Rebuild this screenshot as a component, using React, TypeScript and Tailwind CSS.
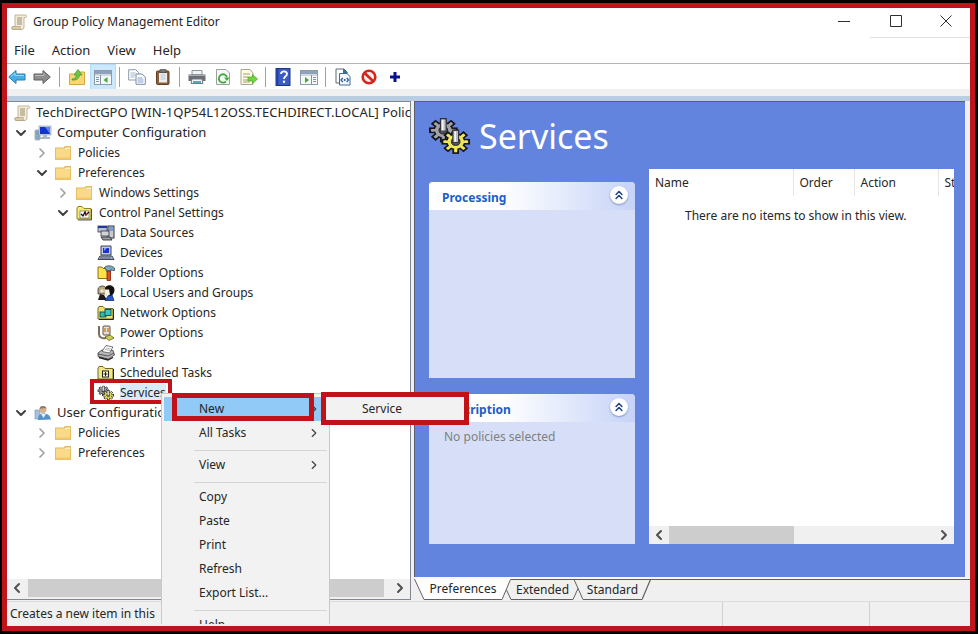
import React from 'react';
import { ChevronDown, ChevronLeft, ChevronRight, ChevronsUp } from 'lucide-react';

interface IconProps {
  className?: string;
}

const ScrollIcon: React.FC<IconProps> = ({ className = 'size-4' }) => (
  <svg viewBox="0 0 16 16" className={className} aria-hidden="true">
    <path d="M4 1h10.500c1.500 0 1.500 2.500 0 2.500H13V13c0 1.500-1 2.500-2.500 2.500H2C.5 15.500.5 12.500 2 12.500h2z" fill="#f4ecd6" stroke="#b5a587" strokeWidth="0.8" />
    <path d="M2 12.500h7.500c-.8 1.200 0 3 1 3H2c-1.500 0-1.500-3 0-3z" fill="#d9cba9" stroke="#a8987a" strokeWidth="0.6" />
    <path d="M6 4h5M6 6h5M6 8h5M6 10h5" stroke="#8d8472" strokeWidth="0.9" />
  </svg>
);

const FolderIcon: React.FC<IconProps> = ({ className = 'size-4' }) => (
  <svg viewBox="0 0 16 16" className={className} aria-hidden="true">
    <path d="M0 2.500h8.500L10 1h6v14H0z" fill="#e3b95c" />
    <path d="M.8 3.500H9.500L11 2h4.200v12.200H.8z" fill="#fbd98a" />
    <path d="M10 3.500h5.200" stroke="#fdf1cf" />
    <path d="M.8 12.500h14.400v1.700H.8z" fill="#f2c766" />
  </svg>
);

const ComputerIcon: React.FC = () => (
  <svg viewBox="0 0 18 16" className="h-4 w-[18px]" aria-hidden="true">
    <rect x="1" y="5" width="5" height="10" rx="1" fill="#a9b7c6" stroke="#7c8b9c" strokeWidth="0.6" />
    <path d="M2 7h3M2 9h3" stroke="#5f86b5" />
    <rect x="5" y="1" width="12" height="9" fill="#c8d4e4" stroke="#8896ad" strokeWidth="0.6" />
    <rect x="6" y="2" width="10" height="7" fill="#1236c4" />
    <path d="M11 2h5v7z" fill="#5b84ee" />
    <path d="M9 10h4v2h3v2H6v-2h3z" fill="#aab6c6" />
    <circle cx="4" cy="12" r="2" fill="#7ca9c9" />
  </svg>
);

const UserIcon: React.FC = () => (
  <svg viewBox="0 0 18 16" className="h-4 w-[18px]" aria-hidden="true">
    <rect x="1" y="5" width="5" height="9" fill="#a9c1dc" stroke="#7590b2" strokeWidth="0.6" />
    <path d="M4 15c0-5 2-6.500 5.500-6.500S16 10 17 14.500z" fill="#5590cc" />
    <path d="M7 9l2.500 4L12 9z" fill="#e8eef5" />
    <circle cx="9" cy="4.500" r="3.500" fill="#d9b088" />
    <path d="M5.500 4C5.500 0 12 0 12.500 3.500L10 3z" fill="#8c7b6c" />
  </svg>
);

const ControlPanelIcon: React.FC = () => (
  <svg viewBox="0 0 16 16" className="size-4" aria-hidden="true">
    <path d="M1 14V3l1-1.500h4l2 2h7V14z" fill="#f7ea74" stroke="#8f8426" />
    <rect x="4" y="6" width="9" height="7" fill="#fff" stroke="#555" strokeWidth="0.6" />
    <path d="M5 9l2 2 2-4 1 3 3-3" stroke="#111" strokeWidth="1.300" fill="none" />
    <path d="M9 11l2-3" stroke="#d33" strokeWidth="1.200" />
    <path d="M15.500 4v11H2" stroke="#333" fill="none" strokeWidth="0.8" />
  </svg>
);

const DataSourcesIcon: React.FC = () => (
  <svg viewBox="0 0 18 16" className="h-4 w-[18px]" aria-hidden="true">
    <rect x="1" y="1" width="9" height="6" fill="#b9c2d2" stroke="#3c4660" strokeWidth="0.8" />
    <path d="M1 2h9" stroke="#23349b" strokeWidth="2" />
    <rect x="11" y="1" width="6" height="12" fill="#c8cbd0" stroke="#222" strokeWidth="0.9" />
    <path d="M12 3h4M12 5h4" stroke="#2f6fd0" />
    <rect x="4" y="6" width="8" height="5" fill="#cfd4da" stroke="#333" strokeWidth="0.8" />
    <path d="M4 12h9l2 3H6z" fill="#9aa0aa" stroke="#222" strokeWidth="0.8" />
  </svg>
);

const DevicesIcon: React.FC = () => (
  <svg viewBox="0 0 18 16" className="h-4 w-[18px]" aria-hidden="true">
    <path d="M4 1h10v9H4z" fill="#c3cadb" stroke="#39415c" />
    <path d="M6 3h6v5H6z" fill="#1733d6" />
    <path d="M7 3h3L7 6z" fill="#7f9cf5" />
    <path d="M3 11h12l2 3.500H1z" fill="#aab3c6" stroke="#2c334a" strokeWidth="0.9" />
    <path d="M3 13h11" stroke="#555f7a" />
  </svg>
);

const FolderOptionsIcon: React.FC = () => (
  <svg viewBox="0 0 18 16" className="h-4 w-[18px]" aria-hidden="true">
    <path d="M1 13.500V2h4l1 1.500h5v10z" fill="#ffe14a" stroke="#8c7411" />
    <path d="M7 3c2-3 7-3 10.500 0v2.500h-2L14 4.500V6H9V4z" fill="#7fa9bd" stroke="#35505e" strokeWidth="0.8" />
    <path d="M10 6h3.500v9.500H10z" fill="#e04b22" stroke="#7a1d0a" strokeWidth="0.8" />
  </svg>
);

const LocalUsersIcon: React.FC = () => (
  <svg viewBox="0 0 18 16" className="h-4 w-[18px]" aria-hidden="true">
    <path d="M1 4c1-4 8-4 8 0v5H1z" fill="#b9a987" stroke="#333" strokeWidth="0.8" />
    <path d="M8 4c0-5 9.500-5 9.500 1 0 3-1.500 4-3 6H9z" fill="#111" />
    <path d="M7.500 4.500h4.500l1 5-3 2-2-2z" fill="#f8f1e2" />
    <path d="M1 15l2-6 4 1 3 5z" fill="#1b1b1b" />
    <path d="M8 15.500l3-4.500 4-1 2 5.500z" fill="#2755cf" stroke="#0d1d55" strokeWidth="0.7" />
    <circle cx="5" cy="6" r="1.800" fill="#f4e6cc" />
  </svg>
);

const NetworkOptionsIcon: React.FC = () => (
  <svg viewBox="0 0 18 16" className="h-4 w-[18px]" aria-hidden="true">
    <path d="M1 14V3l1-1.500h4l2 2h8V14z" fill="#efe069" stroke="#6d6a2a" />
    <rect x="3" y="7" width="6" height="5" fill="#2fb9b3" stroke="#114a49" strokeWidth="0.9" />
    <rect x="8" y="4.500" width="6" height="6" fill="#38c8c0" stroke="#114a49" strokeWidth="0.9" />
    <path d="M16.500 4v10.500H2" stroke="#222" fill="none" />
  </svg>
);

const PowerOptionsIcon: React.FC = () => (
  <svg viewBox="0 0 18 16" className="h-4 w-[18px]" aria-hidden="true">
    <path d="M2 1v8c0 3 3 5 7 4" stroke="#7c6c58" strokeWidth="2" fill="none" />
    <rect x="6" y="1" width="7" height="9" rx="1" fill="#e7dfce" stroke="#5b5144" />
    <path d="M8 3v4M11 3v4" stroke="#c9762a" strokeWidth="1.300" />
    <path d="M8 12l5-2 4 3-5 2.500z" fill="#cfd051" stroke="#5b5b1c" strokeWidth="0.8" />
  </svg>
);

const PrintersIcon: React.FC = () => (
  <svg viewBox="0 0 18 16" className="h-4 w-[18px]" aria-hidden="true">
    <path d="M1 8l4-3 11 .5 1.500 4.500-6 4L1 11.500z" fill="#b9b9b9" stroke="#333" strokeWidth="0.8" />
    <path d="M5 6.500l4-6 7 1.500-3.500 6z" fill="#fff" stroke="#555" strokeWidth="0.8" />
    <path d="M8 4.500l5 1M9 3l5 1" stroke="#999" strokeWidth="0.7" />
    <path d="M1 9l10 2 6-3" stroke="#555" fill="none" />
    <path d="M2 12.500l9 2.500 5-2.500" stroke="#222" strokeWidth="1.300" fill="none" />
  </svg>
);

const ScheduledTasksIcon: React.FC = () => (
  <svg viewBox="0 0 18 16" className="h-4 w-[18px]" aria-hidden="true">
    <path d="M1 14V3l1-1.500h4l2 2h8V14z" fill="#f1e682" stroke="#6d6a2a" />
    <rect x="5.500" y="6" width="6" height="6" fill="#fffbd2" stroke="#222" />
    <path d="M8.500 7v4M6.500 9h4" stroke="#222" fill="none" />
    <path d="M16.500 4v10.500H2" stroke="#222" fill="none" />
  </svg>
);

const teeth = [0, 45, 90, 135, 180, 225, 270, 315];

const Gear: React.FC<{ x: number; y: number; fill: string }> = ({ x, y, fill }) => (
  <g transform={`translate(${x} ${y}) scale(1 0.850)`}>
    {teeth.map((angle) => (
      <rect key={angle} x="-2.500" y="-14" width="5" height="7" fill={fill} stroke="#16161c" strokeWidth="2" transform={`rotate(${angle})`} />
    ))}
    <circle r="9.500" fill={fill} stroke="#16161c" strokeWidth="1.600" />
    {teeth.map((angle) => (
      <rect key={angle} x="-1.600" y="-12" width="3.200" height="6" fill={fill} transform={`rotate(${angle})`} />
    ))}
    <circle r="4.500" fill="#55555c" stroke="#16161c" />
    <rect x="-3" y="-14" width="6" height="15" fill="#b9bac2" stroke="#33333b" strokeWidth="1.200" />
    <rect x="-1.500" y="-13" width="1.800" height="13" fill="#f3f3f8" />
  </g>
);

const GearsIcon: React.FC<IconProps> = ({ className = 'h-4 w-[18px]' }) => (
  <svg viewBox="0 0 44 42" className={className} aria-hidden="true">
    <Gear x={15} y={15} fill="#a3a3a6" />
    <Gear x={28} y={27} fill="#efe75a" />
  </svg>
);

const BackIcon: React.FC = () => (
  <svg viewBox="0 0 18 16" className="h-4 w-[18px]" aria-hidden="true">
    <path d="M.7 8L8 1.500V5h9v6H8v3.500z" fill="#46aee6" stroke="#2b7db4" />
    <path d="M3 7.500L7 4v2.500h9" stroke="#9adaf7" fill="none" />
  </svg>
);

const ForwardIcon: React.FC = () => (
  <svg viewBox="0 0 18 16" className="h-4 w-[18px]" aria-hidden="true">
    <path d="M17.300 8L10 1.500V5H1v6h9v3.500z" fill="#8e8e8e" stroke="#5f5f5f" />
    <path d="M2 6.500h9V4" stroke="#bcbcbc" fill="none" />
  </svg>
);

const UpFolderIcon: React.FC = () => (
  <svg viewBox="0 0 16 16" className="size-4" aria-hidden="true">
    <path d="M.5 15.500V5h8l1.500-2h5.500v12.500z" fill="#f8d675" stroke="#d6a645" />
    <path d="M3 10c3 0 4-1.500 4.500-4H5l4-5.500L13 6h-2.500c-.5 4-3.500 5.500-7.500 5z" fill="#6cc644" stroke="#3f9422" strokeWidth="0.7" />
  </svg>
);

const PaneIcon: React.FC<{ flip?: boolean }> = ({ flip }) => (
  <svg viewBox="0 0 18 16" className="h-4 w-[18px]" aria-hidden="true">
    <rect x=".5" y="1.500" width="17" height="14" fill="#f6f8fa" stroke="#8d9aa8" />
    <path d="M1 2h16v3H1z" fill="#8fa3b8" />
    <path d="M1 6h16" stroke="#a9b8c8" />
    <path d={flip ? 'M11.500 6v9M13 8.500h3M13 10.500h3M13 12.500h3' : 'M6.500 6v9M2 8.500h3M2 10.500h3M2 12.500h3'} stroke="#7f93a8" />
    <path d={flip ? 'M5 8l4 3-4 3z' : 'M13.500 8l-4 3 4 3z'} fill="#3fae2c" />
  </svg>
);

const CopyIcon: React.FC = () => (
  <svg viewBox="0 0 18 16" className="h-4 w-[18px]" aria-hidden="true">
    <path d="M.7.7h7l3 3V11h-10z" fill="#fff" stroke="#8d99ab" />
    <path d="M2.500 4h5M2.500 6h5M2.500 8h4" stroke="#9db4d5" />
    <path d="M8 5h6l3.300 3v7.300H8z" fill="#fff" stroke="#7c8a9f" />
    <path d="M9.500 9h5M9.500 11h6M9.500 13h6" stroke="#7f9fcd" />
  </svg>
);

const PasteIcon: React.FC = () => (
  <svg viewBox="0 0 16 16" className="size-4" aria-hidden="true">
    <rect x="1.500" y="2" width="12.500" height="13.500" rx="1" fill="#8a5f3c" stroke="#5e3e26" />
    <path d="M4 4h8v9.500H4z" fill="#eceef0" />
    <rect x="5" y=".7" width="6" height="3" fill="#777" stroke="#444" strokeWidth="0.700" />
    <path d="M5.500 6h5M5.500 8h5M5.500 10h5" stroke="#bfc4ca" />
  </svg>
);

const PrintIcon: React.FC = () => (
  <svg viewBox="0 0 18 16" className="h-4 w-[18px]" aria-hidden="true">
    <path d="M4 1.500h10V6H4z" fill="#f1f4f7" stroke="#8d949c" />
    <path d="M.5 5.500h17V12H.5z" fill="#6b6f75" />
    <path d="M1 6.500h16" stroke="#a9adb2" />
    <path d="M4 10h10l1 4.500H3z" fill="#f5f8fa" stroke="#737a82" />
    <path d="M5 12h8v2H5z" fill="#5aa6ba" />
  </svg>
);

const RefreshIcon: React.FC = () => (
  <svg viewBox="0 0 16 16" className="size-4" aria-hidden="true">
    <path d="M1.500.5h9.500l3.500 3.500v11.500h-13z" fill="#f8faf8" stroke="#98a2a0" />
    <path d="M11 12.500A4.200 4.200 0 1 1 12 8" stroke="#3fa83a" strokeWidth="1.800" fill="none" />
    <path d="M9 8.500h5.500L12 12z" fill="#3fa83a" />
  </svg>
);

const ExportIcon: React.FC = () => (
  <svg viewBox="0 0 18 16" className="h-4 w-[18px]" aria-hidden="true">
    <path d="M1 .5h9L13 4v11.500H1z" fill="#fffbe6" stroke="#a8a68e" />
    <path d="M3 5h7M3 8h5M3 11h7M3 13h7" stroke="#a39c7d" />
    <path d="M8 8h4.500V5.500l5 4.500-5 4.500V12H8z" fill="#74d43e" stroke="#46a51e" strokeWidth="0.7" />
  </svg>
);

const HelpIcon: React.FC = () => (
  <svg viewBox="0 0 16 18" className="h-[18px] w-4" aria-hidden="true">
    <rect x="1" y=".5" width="14" height="17" fill="#3a5cc4" stroke="#1f3580" />
    <path d="M2.500 1v16" stroke="#1f3f9e" strokeWidth="1.500" />
    <path d="M6 6c0-3.500 6-3.500 6 0 0 2.200-3 2.400-3 5" stroke="#fff" strokeWidth="1.800" fill="none" />
    <circle cx="9" cy="13.700" r="1.200" fill="#fff" />
  </svg>
);

const CodePageIcon: React.FC = () => (
  <svg viewBox="0 0 16 18" className="h-[18px] w-4" aria-hidden="true">
    <path d="M1 1h8l3 3v11H1z" fill="#fff" stroke="#5d6b7d" />
    <path d="M8 .5l5 4.500H8z" fill="#2f7590" />
    <path d="M4.500 5.500H12l3 3V17H4.500z" fill="#f4f9ff" stroke="#42699c" />
    <path d="M7.800 10l-1.800 2 1.800 2M11.700 10l1.800 2-1.800 2" stroke="#2457a8" strokeWidth="1.200" fill="none" />
    <circle cx="9.700" cy="12" r="1" fill="#2457a8" />
  </svg>
);

const StopIcon: React.FC = () => (
  <svg viewBox="0 0 16 16" className="size-4" aria-hidden="true">
    <circle cx="8" cy="8" r="6.300" fill="#fbeceb" stroke="#d4261b" strokeWidth="2.600" />
    <path d="M3.800 4.300l8.200 7.700" stroke="#d4261b" strokeWidth="2.600" />
  </svg>
);

const PlusIcon: React.FC = () => (
  <svg viewBox="0 0 12 12" className="size-3" aria-hidden="true">
    <path d="M4.500 1h3v3.500H11v3H7.500V11h-3V7.500H1v-3h3.500z" fill="#0a0f8c" />
  </svg>
);

interface ToolItem {
  label: string;
  icon: React.ReactNode;
  active?: boolean;
}

const toolGroups: ToolItem[][] = [
  [
    { label: 'Up one level', icon: <UpFolderIcon /> },
    { label: 'Show console tree', icon: <PaneIcon />, active: true },
  ],
  [
    { label: 'Copy', icon: <CopyIcon /> },
    { label: 'Paste', icon: <PasteIcon /> },
  ],
  [
    { label: 'Print', icon: <PrintIcon /> },
    { label: 'Refresh', icon: <RefreshIcon /> },
    { label: 'Export List', icon: <ExportIcon /> },
  ],
  [
    { label: 'Help', icon: <HelpIcon /> },
    { label: 'Show action pane', icon: <PaneIcon flip /> },
  ],
  [
    { label: 'View XML', icon: <CodePageIcon /> },
    { label: 'Disable', icon: <StopIcon /> },
    { label: 'Add', icon: <PlusIcon /> },
  ],
];

interface TreeItem {
  label: string;
  level: number;
  icon: React.ReactNode;
  state?: 'open' | 'closed';
  marked?: boolean;
}

const treeItems: TreeItem[] = [
  { label: 'Computer Configuration', level: 0, icon: <ComputerIcon />, state: 'open' },
  { label: 'Policies', level: 1, icon: <FolderIcon />, state: 'closed' },
  { label: 'Preferences', level: 1, icon: <FolderIcon />, state: 'open' },
  { label: 'Windows Settings', level: 2, icon: <FolderIcon />, state: 'closed' },
  { label: 'Control Panel Settings', level: 2, icon: <ControlPanelIcon />, state: 'open' },
  { label: 'Data Sources', level: 3, icon: <DataSourcesIcon /> },
  { label: 'Devices', level: 3, icon: <DevicesIcon /> },
  { label: 'Folder Options', level: 3, icon: <FolderOptionsIcon /> },
  { label: 'Local Users and Groups', level: 3, icon: <LocalUsersIcon /> },
  { label: 'Network Options', level: 3, icon: <NetworkOptionsIcon /> },
  { label: 'Power Options', level: 3, icon: <PowerOptionsIcon /> },
  { label: 'Printers', level: 3, icon: <PrintersIcon /> },
  { label: 'Scheduled Tasks', level: 3, icon: <ScheduledTasksIcon /> },
  { label: 'Services', level: 3, icon: <GearsIcon />, marked: true },
  { label: 'User Configuration', level: 0, icon: <UserIcon />, state: 'open' },
  { label: 'Policies', level: 1, icon: <FolderIcon />, state: 'closed' },
  { label: 'Preferences', level: 1, icon: <FolderIcon />, state: 'closed' },
];

const indent = ['pl-[6px] text-[13px]', 'pl-[27px]', 'pl-[48px]', 'pl-[69px]'];

const TreeRow: React.FC<{ item: TreeItem }> = ({ item }) => (
  <li className={`flex h-5 ${indent[item.level]}`}>
    <button type="button" className="relative flex items-center whitespace-nowrap">
      <span className="flex w-[21px] shrink-0">
        {item.state === 'open' && <ChevronDown className="size-4 text-[#404040]" strokeWidth={3} />}
        {item.state === 'closed' && <ChevronRight className="size-4 text-[#a0a0a0]" strokeWidth={2.5} />}
      </span>
      <span className="flex w-[23px] shrink-0">{item.icon}</span>
      <span className={item.marked ? 'bg-[#d9ebf9]' : ''}>{item.label}</span>
      {item.marked && (
        <span className="absolute -top-1 left-[14px] h-[25px] w-[82px] border-4 border-[#c1121a]" />
      )}
    </button>
  </li>
);

const ScrollBar: React.FC<{ thumb: string }> = ({ thumb }) => (
  <div className="flex h-[18px] shrink-0 items-center bg-[#f0f0f0] text-[#505050]">
    <button type="button" aria-label="Scroll left" className="flex w-5 justify-center">
      <ChevronLeft className="size-4" strokeWidth={3} />
    </button>
    <div className="h-full min-w-0 flex-1">
      <div className={`h-full bg-[#cdcdcd] ${thumb}`} />
    </div>
    <button type="button" aria-label="Scroll right" className="flex w-5 justify-center">
      <ChevronRight className="size-4" strokeWidth={3} />
    </button>
  </div>
);

interface PanelProps {
  title: string;
  className: string;
  children?: React.ReactNode;
}

const Panel: React.FC<PanelProps> = ({ title, className, children }) => (
  <section className={`rounded-t-sm bg-[#d6dff7] ${className}`}>
    <header className="flex h-7 items-center justify-between rounded-t-sm bg-linear-to-r from-white from-35% to-[#c6d3f7] pr-[7px] pl-[13px]">
      <h2 className="pt-1 text-[12px] font-bold text-[#215dc6]">{title}</h2>
      <button
        type="button"
        aria-label={`Collapse ${title}`}
        className="mb-0.5 flex size-[18px] items-center justify-center rounded-full bg-white text-[#1c3c80] shadow-[0_1px_2px_#8090c0]"
      >
        <ChevronsUp className="size-[14px]" strokeWidth={2.5} />
      </button>
    </header>
    {children}
  </section>
);

const MenuItem: React.FC<{ label: string; arrow?: boolean; active?: boolean }> = ({ label, arrow, active }) => (
  <button
    type="button"
    role="menuitem"
    className={`flex h-6 w-full items-center justify-between pr-1.5 pl-[35px] ${active ? 'bg-[#91c9f7]' : ''}`}
  >
    {label}
    {arrow && <ChevronRight className="size-[14px] text-[#404040]" />}
  </button>
);

const MenuSeparator: React.FC = () => <div className="mb-0.5 ml-[30px] h-1.5 border-b border-[#d5d5d5]" />;

const ContextMenu: React.FC = () => (
  <div
    role="menu"
    className="absolute top-[385px] bottom-[2px] left-[154px] w-[169px] overflow-hidden border border-b-0 border-[#c8c8c8] bg-[#f2f2f2] px-0.5 pt-[3px]"
  >
    <MenuItem label="New" arrow active />
    <MenuItem label="All Tasks" arrow />
    <MenuSeparator />
    <MenuItem label="View" arrow />
    <MenuSeparator />
    <MenuItem label="Copy" />
    <MenuItem label="Paste" />
    <MenuItem label="Print" />
    <MenuItem label="Refresh" />
    <MenuItem label="Export List..." />
    <MenuSeparator />
    <MenuItem label="Help" />
  </div>
);

// Slanted edges that stand between the view tabs
const TabEdge: React.FC<{ kind: 'first' | 'afterActive' | 'middle' | 'last' }> = ({ kind }) => (
  <svg viewBox="0 0 10 21" className="h-[21px] w-[10px] shrink-0" aria-hidden="true">
    {kind === 'first' && <path d="M0 0h10v20.500z" fill="#fff" />}
    {kind === 'afterActive' && <path d="M0 0h9L0 20.500z" fill="#fff" />}
    {kind === 'first' && <path d="M.5 0L10 20.500" stroke="#606060" fill="none" />}
    {kind === 'afterActive' && <path d="M0 20.500L8.500.5H10M4.500 11L9 20.500h1" stroke="#606060" fill="none" />}
    {kind === 'middle' && <path d="M0 .5h10M1 .5l9 20M0 20.500L5 9.500" stroke="#606060" fill="none" />}
    {kind === 'last' && <path d="M0 20.500L8.500.5M0 .5h10" stroke="#606060" strokeWidth="1.200" fill="none" />}
  </svg>
);

const ViewTabs: React.FC = () => (
  <div className="flex h-[21px]" role="tablist">
    <TabEdge kind="first" />
    <button type="button" role="tab" aria-selected="true" className="w-[78px] border-b border-[#606060] bg-white">
      Preferences
    </button>
    <TabEdge kind="afterActive" />
    <button type="button" role="tab" aria-selected="false" className="w-[61px] border-y border-[#606060]">
      Extended
    </button>
    <TabEdge kind="middle" />
    <button type="button" role="tab" aria-selected="false" className="w-[59px] border-y border-[#606060]">
      Standard
    </button>
    <TabEdge kind="last" />
    <div className="flex-1 border-t border-[#606060]" />
  </div>
);

const ToolSeparator: React.FC = () => <span className="mr-[5px] ml-1 h-5 w-px bg-[#a0a0a0]" />;

const App: React.FC = () => {
  return (
    <div className="h-screen min-h-[480px] bg-black pt-[3px] pr-[3px] pb-[3px] pl-[2px] font-['Noto_Sans','Open_Sans',sans-serif] text-[12px] text-[#262626]">
      <div className="relative flex h-full flex-col overflow-hidden border-[5px] border-[#be141b] bg-[#f0f0f0]">
        <header className="flex h-[30px] shrink-0 items-start justify-between bg-white">
          <div className="flex h-7 items-center gap-1.5 pl-1">
            <ScrollIcon />
            <h1>Group Policy Management Editor</h1>
          </div>
          <div className="flex h-full text-[#303030]">
            <button type="button" aria-label="Minimize" className="flex w-[52px] items-center justify-center pb-1">
              <svg viewBox="0 0 12 12" className="size-3" aria-hidden="true">
                <path d="M0 6.500h12" stroke="currentColor" />
              </svg>
            </button>
            <button type="button" aria-label="Maximize" className="flex w-[52px] items-center justify-center border-b border-[#e2e2e2] pb-1">
              <svg viewBox="0 0 12 12" className="size-3" aria-hidden="true">
                <path d="M.5.5h11v11H.5z" stroke="currentColor" fill="none" />
              </svg>
            </button>
            <button type="button" aria-label="Close" className="flex w-12 items-center justify-center border-b border-[#e2e2e2] pb-1">
              <svg viewBox="0 0 12 12" className="size-3" aria-hidden="true">
                <path d="M.5.5l11 11M11.500.5l-11 11" stroke="currentColor" fill="none" />
              </svg>
            </button>
          </div>
        </header>

        <nav className="flex h-[26px] shrink-0 items-center gap-[17px] border-b border-[#b4b4b4] bg-white pl-[7px] text-[13px]">
          <button type="button">File</button>
          <button type="button">Action</button>
          <button type="button">View</button>
          <button type="button">Help</button>
        </nav>

        <div className="flex h-[25px] shrink-0 items-center bg-white">
          <div className="mr-[3px] flex gap-1">
            <button type="button" aria-label="Back" className="flex w-5 justify-center">
              <BackIcon />
            </button>
            <button type="button" aria-label="Forward" className="flex w-[21px] justify-center">
              <ForwardIcon />
            </button>
          </div>
          {toolGroups.map((group) => (
            <React.Fragment key={group[0].label}>
              <ToolSeparator />
              <div className="flex gap-0.5">
                {group.map((tool) => (
                  <button
                    key={tool.label}
                    type="button"
                    aria-label={tool.label}
                    className={`flex size-6 items-center justify-center ${tool.active ? 'bg-[#cce8ff] outline outline-[#b5dcf8]' : ''}`}
                  >
                    {tool.icon}
                  </button>
                ))}
              </div>
            </React.Fragment>
          ))}
        </div>

        <div className="h-[7px] shrink-0 bg-[#f0f0f0]" />
        <div className="h-[5px] shrink-0 bg-[#b9cde3]" />

        <main className="flex min-h-0 flex-1">
          <div className="flex w-[404px] shrink-0 flex-col border-t border-r border-b border-[#828790] bg-white">
            <ul className="min-h-0 flex-1 overflow-hidden pt-px">
              <li className="flex h-5 items-center gap-1.5 pl-[7px] text-[13px] whitespace-nowrap">
                <ScrollIcon className="size-4 shrink-0" />
                <button type="button">TechDirectGPO [WIN-1QP54L12OSS.TECHDIRECT.LOCAL] Policy</button>
              </li>
              {treeItems.map((item, index) => (
                <TreeRow key={index} item={item} />
              ))}
            </ul>
            <ScrollBar thumb="ml-px mr-1.5" />
            <div className="h-0.5 bg-[#f0f0f0]" />
          </div>

          <div className="flex min-w-0 flex-1 flex-col pl-[3px]">
            <div className="mr-[5px] flex min-h-0 flex-1 flex-col border-t border-l border-[#5a5f6b] bg-[#6384de] pr-[11px] pb-[33px] pl-[14px]">
              <div className="flex h-[67px] items-center gap-2 text-white">
                <GearsIcon className="size-[42px]" />
                <h2 className="text-[34px] leading-10">Services</h2>
              </div>
              <div className="flex min-h-0 flex-1 gap-[14px]">
                <div className="flex w-[206px] shrink-0 flex-col gap-4 pt-[13px]">
                  <Panel title="Processing" className="flex-1" />
                  <Panel title="Description" className="h-[150px]">
                    <p className="px-[15px] pt-1.5 text-[#808080]">No policies selected</p>
                  </Panel>
                </div>
                <div className="flex min-w-0 flex-1 flex-col bg-white">
                  <div className="min-h-0 flex-1 overflow-hidden">
                    <table className="w-[370px] table-fixed text-left">
                      <thead>
                        <tr className="h-[27px]">
                          <th className="w-[144px] border-r border-[#e5e5e5] pl-1.5 font-normal">Name</th>
                          <th className="w-[61px] border-r border-[#e5e5e5] pl-1.5 font-normal">Order</th>
                          <th className="w-[84px] border-r border-[#e5e5e5] pl-1.5 font-normal">Action</th>
                          <th className="pl-1.5 font-normal">State</th>
                        </tr>
                      </thead>
                      <tbody>
                        <tr className="h-10">
                          <td colSpan={4} className="pl-9">There are no items to show in this view.</td>
                        </tr>
                      </tbody>
                    </table>
                  </div>
                  <ScrollBar thumb="w-[47%]" />
                </div>
              </div>
            </div>
            <div className="h-0.5 shrink-0 bg-[#f8f8f8]" />
            <ViewTabs />
          </div>
        </main>

        <footer className="mt-px flex h-[25px] shrink-0 items-center border-t border-[#dcdcdc] pl-[3px]">
          <p className="flex-1">Creates a new item in this</p>
          <div className="h-full w-[147px] border-l border-[#d0d0d0]" />
          <div className="h-full w-[101px] border-l border-[#d0d0d0]" />
        </footer>

        <ContextMenu />
        {/* Highlight frame round the chosen command */}
        <div className="absolute top-[385px] left-[165px] h-7 w-[142px] border-[5px] border-[#c1121a]" />
        <div role="menu" className="absolute top-[384px] left-[314px] w-[148px] border-[5px] border-[#c1121a] bg-[#f2f2f2]">
          <button type="button" role="menuitem" className="flex h-[23px] w-full items-center pl-9">
            Service
          </button>
        </div>
      </div>
    </div>
  );
};

export default App;
